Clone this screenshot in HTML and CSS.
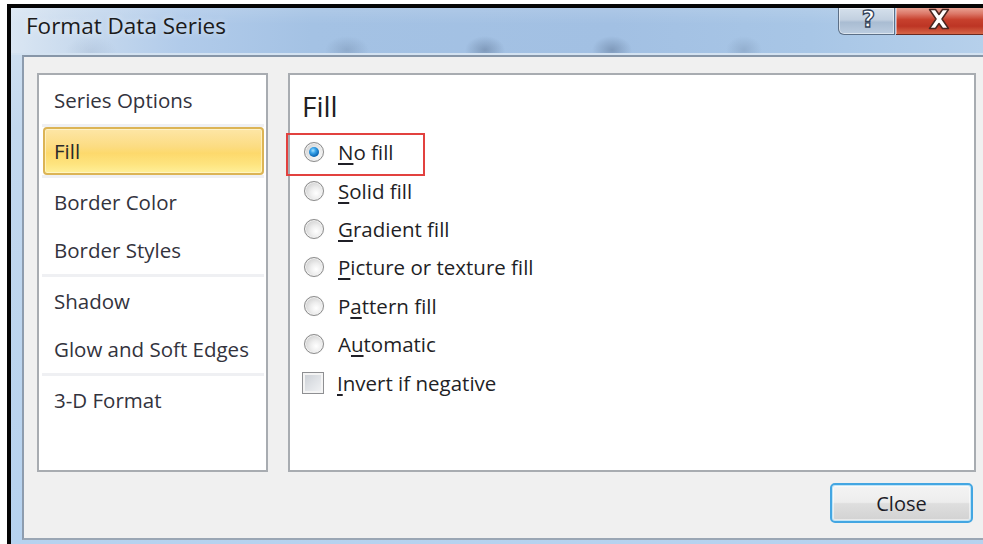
FILE: index.html
```html
<!DOCTYPE html>
<html lang="en">
<head>
<meta charset="utf-8">
<title>Format Data Series</title>
<link rel="stylesheet" href="styles.css">
</head>
<body>
<div class="window">
  <div class="titlebar">
    <span class="title">Format Data Series</span>
    <div class="caption-btns">
      <div class="cap-btn cap-help"><span>?</span></div>
      <div class="cap-btn cap-close">
        <svg width="24" height="22" viewBox="0 0 24 22" aria-hidden="true">
          <path d="M2.5 1.5 H8.5 L12 6.5 L15.5 1.5 H21.5 L15 11 L21.5 20.5 H15.5 L12 15.5 L8.5 20.5 H2.5 L9 11 Z" fill="#fff" stroke="#4a2620" stroke-width="1.5" stroke-linejoin="round"/>
        </svg>
      </div>
    </div>
  </div>
  <div class="frame-body">
    <div class="client">
      <div class="panels">
        <div class="nav">
          <div class="nav-item">Series Options</div>
          <div class="nav-sep"></div>
          <div class="nav-item is-active">Fill</div>
          <div class="nav-sep"></div>
          <div class="nav-item">Border Color</div>
          <div class="nav-item">Border Styles</div>
          <div class="nav-sep"></div>
          <div class="nav-item">Shadow</div>
          <div class="nav-item">Glow and Soft Edges</div>
          <div class="nav-sep"></div>
          <div class="nav-item">3-D Format</div>
        </div>
        <div class="pane">
          <div class="pane-title">Fill</div>
          <div class="option is-marked">
            <span class="radio is-checked"></span>
            <span class="label"><u>N</u>o fill</span>
            <span class="mark-box"></span>
          </div>
          <div class="option">
            <span class="radio"></span>
            <span class="label"><u>S</u>olid fill</span>
          </div>
          <div class="option">
            <span class="radio"></span>
            <span class="label"><u>G</u>radient fill</span>
          </div>
          <div class="option">
            <span class="radio"></span>
            <span class="label"><u>P</u>icture or texture fill</span>
          </div>
          <div class="option">
            <span class="radio"></span>
            <span class="label">P<u>a</u>ttern fill</span>
          </div>
          <div class="option">
            <span class="radio"></span>
            <span class="label">A<u>u</u>tomatic</span>
          </div>
          <div class="option">
            <span class="checkbox"></span>
            <span class="label"><u>I</u>nvert if negative</span>
          </div>
        </div>
      </div>
      <div class="footer">
        <button class="btn" type="button">Close</button>
      </div>
    </div>
  </div>
</div>
</body>
</html>
```

FILE: styles.css
```css
* { box-sizing: border-box; }

html, body {
  margin: 0;
  padding: 0;
}

body {
  width: 983px;
  height: 544px;
  overflow: hidden;
  background: #ffffff;
  font-family: "Open Sans", "Noto Sans", "DejaVu Sans", sans-serif;
  color: #1f1f24;
}

/* window chrome: dark outline, aero glass frame */
.window {
  margin: 4px 0 0 7px;
  height: 540px;
  border-top: 4px solid #050505;
  border-left: 4px solid #050505;
  display: flex;
  flex-direction: column;
  background: linear-gradient(180deg, #d4e3f2 0px, #c3d8ee 120px, #b6d2ef 540px);
}

.titlebar {
  height: 47px;
  flex: none;
  display: flex;
  justify-content: space-between;
  align-items: flex-start;
  padding-left: 15px;
  background:
    radial-gradient(ellipse 22px 14px at 336px 42px, rgba(70, 90, 120, 0.22), transparent),
    radial-gradient(ellipse 20px 14px at 474px 42px, rgba(60, 80, 110, 0.34), transparent),
    radial-gradient(ellipse 20px 14px at 601px 42px, rgba(60, 80, 110, 0.34), transparent),
    radial-gradient(ellipse 18px 14px at 733px 42px, rgba(70, 90, 120, 0.2), transparent),
    radial-gradient(ellipse 26px 16px at 80px 44px, rgba(90, 110, 140, 0.12), transparent),
    linear-gradient(180deg, rgba(255, 255, 255, 0.12) 0px, rgba(255, 255, 255, 0) 16px),
    linear-gradient(90deg, #dae6f3 0px, #cadbee 60px, #b1cbea 170px, #a4c2e4 300px, #a2c0e3 600px, #a8c6e6 800px, #b6d0eb 972px);
  box-shadow: inset 0 -2px 0 #d3e2f1;
}

.title {
  margin-top: 3px;
  font-size: 22.5px;
  line-height: 30px;
  color: #1b1b1b;
  text-shadow: 0 0 6px rgba(255, 255, 255, 0.7);
}

.caption-btns {
  display: flex;
  gap: 1px;
}

.cap-btn {
  height: 27px;
  display: flex;
  align-items: center;
  justify-content: center;
}

.cap-help {
  width: 57px;
  border: 1px solid #5c6f86;
  border-top: none;
  border-radius: 0 0 0 6px;
  background: linear-gradient(180deg, #d5e0ec 0%, #c2d0e0 45%, #a9bcd2 55%, #bccde0 100%);
  box-shadow: inset 0 0 0 1px rgba(255, 255, 255, 0.5);
}

.cap-help span {
  font-family: "DejaVu Sans", sans-serif;
  font-weight: bold;
  font-size: 23px;
  line-height: 1;
  color: #ffffff;
  -webkit-text-stroke: 1.3px #34435a;
  margin-top: -3px;
  margin-left: 4px;
}

.cap-close {
  width: 87px;
  border-bottom: 1px solid #6a2a20;
  padding-right: 2px;
  background: linear-gradient(180deg, #e9a294 0%, #dc7868 22%, #c7402d 45%, #bd3524 70%, #d66648 100%);
  box-shadow: inset 1px 0 0 rgba(255, 255, 255, 0.45);
}

.cap-close svg {
  margin-top: -4px;
}

.frame-body {
  flex: 1;
  display: flex;
  padding: 0 0 4px 11px;
}

/* dialog client area */
.client {
  flex: 1;
  display: flex;
  flex-direction: column;
  background: #f0f0f0;
  border-top: 2px solid #8796a8;
  border-left: 2px solid #8d9cae;
  border-bottom: 2px solid #9aa6b4;
  padding: 16px 7px 0 13px;
}

.panels {
  height: 399px;
  display: flex;
  gap: 20px;
}

/* category list on the left */
.nav {
  width: 231px;
  flex: none;
  background: #ffffff;
  border: 2px solid #a8acb1;
  padding: 1px 1px 0 1px;
  display: flex;
  flex-direction: column;
}

.nav-item {
  height: 48px;
  line-height: 48px;
  margin: 0 1px 0 3px;
  padding-left: 11px;
  font-size: 20.5px;
  color: #33333d;
  white-space: nowrap;
}

.nav-item.is-active {
  border: 2px solid #dcb455;
  border-radius: 4px;
  line-height: 44px;
  padding-left: 9px;
  color: #2a2a2a;
  background: linear-gradient(180deg, #fde6a6 0%, #fcdc82 40%, #fdd96c 55%, #fee47f 80%, #fff09a 100%);
  box-shadow: inset 0 0 0 1px rgba(255, 250, 220, 0.6);
}

.nav-sep {
  height: 3px;
  margin: 0 1px 0 2px;
  background: #eff0f3;
}

/* options pane on the right */
.pane {
  flex: 1;
  background: #ffffff;
  border: 2px solid #a8acb1;
  padding: 10px 0 0 0;
}

.pane-title {
  height: 42px;
  line-height: 42px;
  padding-left: 12px;
  font-size: 28px;
  color: #202020;
  margin-bottom: 6px;
}

.option {
  position: relative;
  height: 38.4px;
  display: flex;
  align-items: center;
  padding-left: 14px;
}

.label {
  margin-left: 14px;
  font-size: 20.5px;
  color: #1f1f26;
  white-space: nowrap;
}

.label u {
  text-decoration-thickness: 2px;
  text-underline-offset: 3px;
}

.radio {
  position: relative;
  width: 20px;
  height: 20px;
  flex: none;
  border-radius: 50%;
  border: 1px solid #8c8c8c;
  background: radial-gradient(circle at 62% 62%, #ffffff 0%, #eeeeee 35%, #d2d2d2 75%, #c2c2c2 100%);
  box-shadow: inset 0 0 0 1px #f3f3f3, 0 0 1px rgba(0, 0, 0, 0.15);
}

.radio.is-checked::after {
  content: "";
  position: absolute;
  left: 4px;
  top: 4px;
  width: 10px;
  height: 10px;
  border-radius: 50%;
  background: radial-gradient(circle at 40% 35%, #a6e2ff 0%, #3aa4ea 30%, #0d68b4 68%, #0a3f78 100%);
}

.checkbox {
  width: 22px;
  height: 22px;
  flex: none;
  margin-left: -2px;
  margin-right: -1px;
  border: 1px solid #8e8f92;
  background: linear-gradient(135deg, #c9cdd3 0%, #dfe2e6 50%, #f3f4f6 100%);
  box-shadow: inset 0 0 0 2px #f4f4f4;
}

/* red annotation frame around the selected choice */
.mark-box {
  position: absolute;
  left: -4px;
  top: 0;
  width: 139px;
  height: 43px;
  border: 2px solid #e2413f;
  pointer-events: none;
}

.footer {
  display: flex;
  justify-content: flex-end;
  padding: 11px 3px 0 0;
}

.btn {
  width: 143px;
  height: 40px;
  padding: 0;
  font-family: inherit;
  font-size: 20px;
  color: #1d1d28;
  border: 2px solid #43a6e2;
  border-radius: 5px;
  background: linear-gradient(180deg, #f4f4f4 0%, #ededed 48%, #dedede 52%, #d2d2d2 100%);
  box-shadow: inset 0 0 0 1px #bfe4f7, inset 0 0 0 2px rgba(255, 255, 255, 0.5);
}
```
